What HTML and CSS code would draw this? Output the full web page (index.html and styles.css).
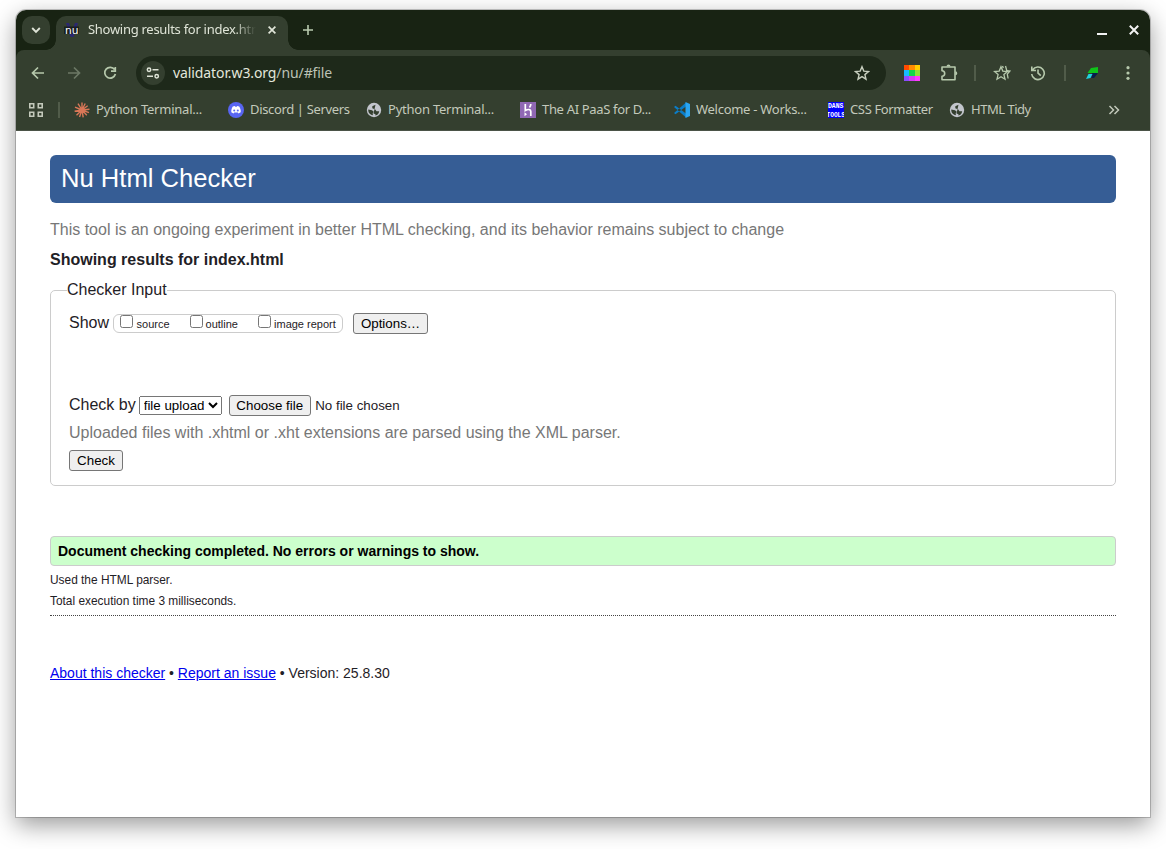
FILE: index.html
```html
<!DOCTYPE html>
<html lang="en">
<head>
<meta charset="utf-8">
<title>Showing results for index.html</title>
<link rel="stylesheet" href="styles.css">
</head>
<body>
<div class="window">
  <div class="titlebar">
    <div class="tab-search"><svg width="10" height="10" viewBox="0 0 10 10"><path d="M1.200 3l3.800 3.800L8.800 3" fill="none" stroke="#dfe4d7" stroke-width="1.900"/></svg></div>
    <div class="tab">
      <svg class="tab-icon" width="16" height="16" viewBox="0 0 16 16"><path d="M2 1h3l3 8 3-8h3L9.500 15h-3z" fill="#2b2870"/><path d="M0 4.500h15v7.500H0z" fill="#11160f" opacity=".7"/><text class="nu" x="1" y="11.500" textLength="13.500" lengthAdjust="spacingAndGlyphs">nu</text></svg>
      <span class="tab-title">Showing results for index.html</span>
      <svg class="tab-close" width="8" height="8" viewBox="0 0 8 8"><path d="M.6.6l6.800 6.800M7.400.6L.6 7.400" stroke="#e0e5d8" stroke-width="1.700"/></svg>
    </div>
    <svg class="new-tab" width="12" height="12" viewBox="0 0 12 12"><path d="M6 1v10M1 6h10" stroke="#b9cbb0" stroke-width="1.600"/></svg>
    <svg class="minimize" width="10" height="10" viewBox="0 0 10 10"><path d="M0 9h10" stroke="#f2f2f2" stroke-width="2"/></svg>
    <svg class="win-close" width="10" height="10" viewBox="0 0 10 10"><path d="M.8.8l8.400 8.400M9.200.8L.8 9.200" stroke="#f2f2f2" stroke-width="2"/></svg>
  </div>
  <div class="chrome-back">
  <div class="chrome">
    <div class="toolbar">
      <svg class="nav" width="16" height="16" viewBox="0 0 16 16"><path d="M14 8H3M8 2.500L2.500 8 8 13.500" fill="none" stroke="#b6c9ac" stroke-width="1.700"/></svg>
      <svg class="nav" width="16" height="16" viewBox="0 0 16 16"><path d="M2 8h11M8 2.500L13.500 8 8 13.500" fill="none" stroke="#6c7865" stroke-width="1.700"/></svg>
      <svg class="nav" width="16" height="16" viewBox="0 0 16 16"><path d="M12.600 4.600A5.400 5.400 0 1 0 13.400 9M13.300 2v4.200H9" fill="none" stroke="#b6c9ac" stroke-width="1.700"/></svg>
      <div class="omnibox">
        <div class="site-info"><svg width="14" height="12" viewBox="0 0 14 12"><g fill="none" stroke="#dfe4d7" stroke-width="1.500"><circle cx="3" cy="2.700" r="1.700"/><path d="M6.500 2.700H12.500M1 9.300h6"/><circle cx="10.700" cy="9.300" r="1.700"/></g></svg></div>
        <span class="url">validator.w3.org<i>/nu/#file</i></span>
        <svg class="star" width="16" height="16" viewBox="0 0 16 16"><path d="M8 1.700l1.800 4.400 4.700.4-3.600 3.100 1.100 4.600L8 11.700l-4 2.500 1.100-4.600L1.500 6.500l4.700-.4z" fill="none" stroke="#c8cfbf" stroke-width="1.400"/></svg>
      </div>
      <svg class="ext-colors" width="16" height="16" viewBox="0 0 16 16"><path fill="#ff4a00" d="M0 0h6v5H0z"/><path fill="#ff8c00" d="M5 0h6v5H5z"/><path fill="#ffce00" d="M11 0h5v5h-5z"/><path fill="#18b9ff" d="M0 5h5v6H0z"/><path fill="#12d84c" d="M5 5h6v6H5z"/><path fill="#8be438" d="M11 5h5v6h-5z"/><path fill="#8a4cff" d="M0 11h5v5H0z"/><path fill="#d43cf5" d="M5 11h6v5H5z"/><path fill="#ff3cff" d="M11 11h5v5h-5z"/></svg>
      <svg class="ext-puzzle" width="18" height="18" viewBox="0 0 18 18"><path d="M2 3h13v12.800H2v-3.600a2.700 2.700 0 0 0 0-5.400z" fill="none" stroke="#b6c9ac" stroke-width="1.600" stroke-linejoin="round"/><path d="M6.500 2.500a2 2 0 0 1 4 0M15.300 7.300a2 2 0 0 1 0 4" fill="#b6c9ac"/></svg>
      <span class="rule rule-a"></span>
      <svg class="fav" width="18" height="16" viewBox="0 0 18 16"><path d="M8 1.700l1.800 4.400 4.700.4-3.600 3.100 1.100 4.600L8 11.700l-4 2.500 1.100-4.600L1.500 6.500l4.700-.4zM9.500 1l.8 2M12.500 1l1.300 4.700 3.200.3-2.700 3.200.8 4.300" fill="none" stroke="#b6c9ac" stroke-width="1.300"/></svg>
      <svg class="history" width="16" height="16" viewBox="0 0 16 16"><path d="M2.600 5A6.300 6.300 0 1 1 1.700 9M1.800 1.500V5.500H6M8 4.500V8.200l2.800 2.500" fill="none" stroke="#b6c9ac" stroke-width="1.600"/></svg>
      <span class="rule rule-b"></span>
      <svg class="profile" width="14" height="14" viewBox="0 0 14 14"><path d="M13 1v6H2.500L6 2z" fill="#0fc419"/><path d="M13 7L9 12H6.500L7 7z" fill="#091d4b"/><path d="M1 13l2.500-5H7.500L5.500 12z" fill="#20d2df"/></svg>
      <svg class="menu" width="4" height="16" viewBox="0 0 4 16"><g fill="#b6c9ac"><circle cx="2" cy="2.700" r="1.600"/><circle cx="2" cy="8" r="1.600"/><circle cx="2" cy="13.300" r="1.600"/></g></svg>
    </div>
    <div class="bookmarks">
      <svg class="apps" width="16" height="16" viewBox="0 0 16 16"><path d="M1.800 1.800h3.900v3.900H1.800zM10.300 1.800h3.900v3.900h-3.900zM1.800 10.300h3.900v3.900H1.800zM10.300 10.300h3.900v3.900h-3.900z" fill="none" stroke="#c3c9bb" stroke-width="1.600"/></svg>
      <span class="rule rule-c"></span>
      <div class="bm"><svg width="16" height="16" viewBox="0 0 16 16"><path d="M8 8V.5M8 8l3.200-6.500M8 8l5.700-4.200M8 8l7.500-.8M8 8l7 2.600M8 8l4.800 5.300M8 8l1.200 7.400M8 8l-2.500 7M8 8l-5.500 5.200M8 8L.6 9.200M8 8L1 5.200M8 8L4 1.600" stroke="#d97757" stroke-width="1.400"/></svg><span class="t1">Python Terminal...</span></div>
      <div class="bm bm-discord"><svg width="16" height="16" viewBox="0 0 16 16"><circle cx="8" cy="8" r="8" fill="#5865f2"/><path d="M4.800 4.600l2-.6.5.8h1.400l.5-.8 2 .6c1.300 2 1.700 4 1.500 5.700l-2.200 1.200-.7-1.100H6.200l-.7 1.100-2.200-1.200c-.2-2 .4-4 1.500-5.700z" fill="#fff"/><circle cx="6.200" cy="8.400" r="1" fill="#5865f2"/><circle cx="9.800" cy="8.400" r="1" fill="#5865f2"/></svg><span class="t2">Discord | Servers</span></div>
      <div class="bm"><svg width="16" height="16" viewBox="0 0 16 16"><circle cx="8" cy="8" r="7.200" fill="#c2c5cc"/><path d="M9.500 2.700L6.300 4.300v2l3 1.200 1.200 1.700h2.700C13 11.500 11.500 13.200 9.300 13.500l.2-1.300-2-.7zM2.300 7.500L6 8.300l1.700 1.500-1 1.500.2 2C4.500 13 2.500 11 2.300 9z" fill="#343f2f"/></svg><span class="t1">Python Terminal...</span></div>
      <div class="bm"><svg width="16" height="16" viewBox="0 0 16 16"><path fill="#9068b4" d="M0 0h16v16H0z"/><path d="M5.300 2v6.500c3-1.500 5.500-1.400 5.500 1V14M10.800 2c0 1.500-.5 2.500-1.300 3.500" fill="none" stroke="#fff" stroke-width="1.700"/><path d="M4.500 10.200L7 12.200l-2.500 2z" fill="#fff"/></svg><span class="t3">The AI PaaS for D...</span></div>
      <div class="bm"><svg width="16" height="16" viewBox="0 0 16 16"><path d="M0 5l1.500-1.200L12 11.500v4zM0 11l1.500 1.200L12 4.500v-4z" fill="#0b7dc8"/><path d="M11.500 0L16 2v12l-4.500 2z" fill="#2aa5f2"/></svg><span class="t4">Welcome - Works...</span></div>
      <div class="bm bm-css"><svg width="16" height="16" viewBox="0 0 16 16"><path fill="#00f" d="M0 0h16v16H0z"/><text class="dans" x="0" y="6.300" textLength="15.500" lengthAdjust="spacingAndGlyphs">DANS</text><text class="dans" x="-1.500" y="15" textLength="18.500" lengthAdjust="spacingAndGlyphs">TOOLS</text></svg><span class="t5">CSS Formatter</span></div>
      <div class="bm bm-tidy"><svg width="16" height="16" viewBox="0 0 16 16"><circle cx="8" cy="8" r="7.200" fill="#c2c5cc"/><path d="M9.500 2.700L6.300 4.300v2l3 1.200 1.200 1.700h2.700C13 11.500 11.500 13.200 9.300 13.500l.2-1.300-2-.7zM2.300 7.500L6 8.300l1.700 1.500-1 1.500.2 2C4.500 13 2.500 11 2.300 9z" fill="#343f2f"/></svg><span class="t6">HTML Tidy</span></div>
      <svg class="more" width="12" height="10" viewBox="0 0 12 10"><path d="M1.500 1l4 4-4 4M6.500 1l4 4-4 4" fill="none" stroke="#c3c9bb" stroke-width="1.500"/></svg>
    </div>
  </div>
  </div>
  <main class="page">
    <h1 class="banner">Nu Html Checker</h1>
    <p class="intro">This tool is an ongoing experiment in better HTML checking, and its behavior remains subject to change</p>
    <h2 class="results-title">Showing results for index.html</h2>
    <fieldset class="inputs">
      <legend>Checker Input</legend>
      <div class="show-row">
        <span class="lead">Show</span>
        <div class="extras">
          <label class="o1"><input type="checkbox"><span>source</span></label>
          <label class="o2"><input type="checkbox"><span>outline</span></label>
          <label class="o3"><input type="checkbox"><span>image report</span></label>
        </div>
        <button class="options">Options…</button>
      </div>
      <div class="check-row">
        <span class="lead">Check by</span>
        <select><option>file upload</option></select>
        <button class="choose">Choose file</button>
        <span class="nofile">No file chosen</span>
      </div>
      <p class="hint">Uploaded files with .xhtml or .xht extensions are parsed using the XML parser.</p>
      <button class="check">Check</button>
    </fieldset>
    <p class="success">Document checking completed. No errors or warnings to show.</p>
    <p class="detail">Used the HTML parser.</p>
    <p class="detail">Total execution time 3 milliseconds.</p>
    <footer class="about"><a href="#">About this checker</a> • <a href="#">Report an issue</a> • Version: 25.8.30</footer>
  </main>
</div>
</body>
</html>
```
FILE: styles.css
```css
* { box-sizing: border-box; }
body { margin: 0; min-height: 100vh; display: flow-root; background: #fff; font-family: "Liberation Sans", Arial, sans-serif; color: #1f2126; }
svg { display: block; flex: none; }
p, h1, h2 { margin: 0; font-weight: normal; }
.window { margin: 10px 16px 0; width: 1134px; height: 807px; border-radius: 10px 10px 0 0; background: #fff; box-shadow: 0 0 0 1px rgba(0,0,0,.2), 0 8px 24px rgba(0,0,0,.4); }
.titlebar { height: 40px; display: flex; align-items: flex-start; background: #182313; border-radius: 10px 10px 0 0; }
.tab-search { width: 28px; height: 28px; margin: 6px 6px 0; border-radius: 10px; background: #343f2f; display: flex; align-items: center; justify-content: center; }
.tab { position: relative; width: 232px; height: 34px; margin-top: 6px; padding: 0 12px 6px 8px; display: flex; align-items: center; background: #343f2f; border-radius: 10px 10px 0 0; }
.tab::before, .tab::after { content: ""; position: absolute; bottom: 0; width: 10px; height: 10px; }
.tab::before { left: -10px; background: radial-gradient(circle at 0 0, transparent 9.5px, #343f2f 10px); }
.tab::after { right: -10px; background: radial-gradient(circle at 100% 0, transparent 9.5px, #343f2f 10px); }
.nu { font: 10.5px "DejaVu Sans", sans-serif; fill: #fff; }
.dans { font: bold 7.5px "Liberation Mono", monospace; fill: #fff; }
.tab-title { margin: -2px 0 0 8px; width: 170px; overflow: hidden; white-space: nowrap; font: 13px/20px "Noto Sans", sans-serif; letter-spacing: -.28px; color: #dfe4d7; -webkit-mask-image: linear-gradient(90deg, #000 146px, transparent 168px); mask-image: linear-gradient(90deg, #000 146px, transparent 168px); }
.tab-close { margin-left: auto; }
.new-tab { margin: 14px 0 0 14px; }
.minimize { margin: 15px 0 0 auto; }
.win-close { margin: 15px 11px 0 22px; }
.chrome-back { background: #182313; }
.chrome { height: 81px; background: #343f2f; border-bottom: 1px solid #4b5347; border-radius: 8px 8px 0 0; }
.toolbar { height: 46px; padding: 0 20px 0 14px; display: flex; align-items: center; }
.nav { margin-right: 20px; }
.omnibox { width: 750px; height: 34px; margin-left: -2px; padding: 0 16px 0 5px; border-radius: 17px; background: #1e291a; display: flex; align-items: center; }
.site-info { width: 24px; height: 24px; border-radius: 12px; background: #343f2f; display: flex; align-items: center; justify-content: center; }
.url { margin-left: 8px; font: 14px/20px "Noto Sans", sans-serif; letter-spacing: -.1px; color: #e3e7dc; white-space: nowrap; }
.url i { font-style: normal; color: #bcc2b5; }
.star { margin-left: auto; }
.ext-colors { margin-left: 18px; }
.ext-puzzle { margin-left: 20px; }
.rule { width: 2px; height: 16px; background: #515c4a; flex: none; }
.rule-a { margin: 0 17px 0 16px; }
.history { margin-left: 19px; }
.rule-b { margin: 0 19px 0 18px; }
.menu { margin-left: auto; }
.bookmarks { height: 28px; padding-left: 12px; display: flex; align-items: center; font: 13px/20px "Noto Sans", sans-serif; color: #c3c9bb; white-space: nowrap; }
.rule-c { margin: 0 14px; }
.bm { width: 154px; display: flex; align-items: center; gap: 6px; flex: none; }
.bm span { margin-top: -2px; }
.bm-discord { width: 138px; }
.bm-css { width: 121px; }
.bm-tidy { width: 104px; }
.t1 { letter-spacing: -.23px; }
.t2 { letter-spacing: -.35px; }
.t3 { letter-spacing: -.33px; }
.t4 { letter-spacing: -.28px; }
.t5 { letter-spacing: -.36px; }
.t6 { letter-spacing: -.48px; }
.more { margin-left: 55px; }
.page { padding: 24px 34px 0; }
.banner { height: 48px; padding-left: 11px; border-radius: 6px; background: #365d95; color: #fff; font-size: 25.6px; line-height: 47px; }
.intro { margin-top: 17px; font-size: 16px; line-height: 20px; color: #777; }
.results-title { margin-top: 10px; font-size: 16px; line-height: 20px; font-weight: bold; }
.inputs { margin: 10px 0 0; height: 206px; padding: 0 18px; border: 1px solid #ccc; border-radius: 5px; font-size: 16px; }
.inputs legend { margin-left: -2px; padding: 0; line-height: 20px; }
.show-row, .check-row { display: flex; align-items: center; height: 22px; }
.show-row { margin-top: 12px; }
.check-row { margin-top: 60px; }
.lead { line-height: 20px; }
.extras { width: 230px; height: 19px; margin: 1px 10px 0 4px; display: flex; border: 1px solid #ccc; border-radius: 6px; font-size: 11px; line-height: 19px; }
.extras label { display: flex; flex: none; gap: 3.5px; }
.extras input { width: 13px; height: 13px; margin: 0; }
.o1 { width: 70px; margin-left: 6px; }
.o2 { width: 68px; }
.extras .o2 { gap: 2.5px; }
.extras .o3 { gap: 3px; }
button, select { font-family: "Liberation Sans", Arial, sans-serif; font-size: 13.333px; }
button { height: 21px; padding: 0; color: #000; background: #efefef; border: 1px solid #767676; border-radius: 3px; }
.options { width: 75px; }
.check-row select { width: 83px; height: 19px; margin: 1px 7px 0 3px; padding: 0; }
.choose { width: 82px; margin-top: 1px; }
.nofile { margin: 1px 0 0 4.5px; font-size: 13.333px; }
.hint { margin-top: 7px; line-height: 20px; color: #777; }
.check { display: block; width: 54px; margin-top: 7px; }
.success { height: 30px; margin-top: 50px; padding-left: 7px; border: 1px solid #ccc; border-radius: 4px; background: #cfc; font-size: 14px; line-height: 28px; font-weight: bold; color: #000; }
.detail { font-size: 11.9px; line-height: 21px; }
.success + .detail { margin-top: 4px; }
.about { margin-top: 3px; padding-top: 47px; border-top: 1px dotted #444; font-size: 14px; line-height: 20px; }
.about a { color: #0000ee; text-decoration: underline; }
```
